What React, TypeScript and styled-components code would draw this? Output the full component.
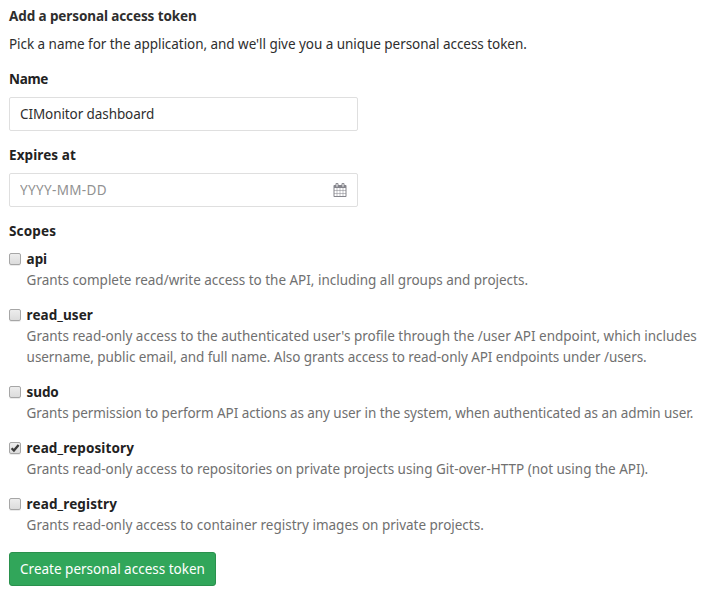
import React, { useState } from "react";
import styled, { createGlobalStyle } from "styled-components";

const GlobalStyle = createGlobalStyle`
  *, *::before, *::after { box-sizing: border-box; }
  body {
    margin: 0;
    background: #fff;
    color: #2e2e2e;
    font: 13.5px/21px "Noto Sans", "Open Sans", sans-serif;
  }
`;

interface Tracked {
  $tracking?: number;
}

const Form = styled.form`
  display: flex;
  flex-direction: column;
  align-items: flex-start;
  width: 705px;
  padding: 6px 0 0 9px;
`;

const Title = styled.h5<Tracked>`
  margin: 0 0 7px;
  font-size: inherit;
  font-weight: 700;
  letter-spacing: ${(p) => p.$tracking ?? 0}px;
`;

const Intro = styled.p<Tracked>`
  margin: 0 0 14px;
  white-space: nowrap;
  letter-spacing: ${(p) => p.$tracking ?? 0}px;
`;

const Field = styled.div`
  display: flex;
  flex-direction: column;
  gap: 7px;
  width: 349px;
  margin-bottom: 14px;
`;

const Label = styled.label<Tracked>`
  color: #222;
  font-weight: 700;
  letter-spacing: ${(p) => p.$tracking ?? 0}px;
`;

const InputFrame = styled.div`
  display: flex;
  align-items: center;
  height: 34px;
  padding: 0 10px;
  border: 1px solid #dfdfdf;
  border-radius: 2px;
  background: #fff;
`;

const TextInput = styled.input<Tracked>`
  flex: 1;
  min-width: 0;
  height: 21px;
  padding: 0;
  border: 0;
  outline: 0;
  background: transparent;
  color: #2e2e2e;
  font: inherit;
  letter-spacing: ${(p) => p.$tracking ?? 0}px;

  &::placeholder {
    color: #919191;
    opacity: 1;
  }
`;

const ScopeList = styled.div`
  display: flex;
  flex-direction: column;
  gap: 14px;
  margin-top: 7px;
`;

const ScopeRow = styled.div`
  display: grid;
  grid-template-columns: 12px 1fr;
  column-gap: 5.6px;
`;

const CheckHolder = styled.span`
  display: grid;
  width: 12px;
  height: 12px;
  margin-top: 4px;

  > * {
    grid-area: 1 / 1;
  }
`;

const Checkbox = styled.input`
  appearance: none;
  width: 12px;
  height: 12px;
  margin: 0;
  border: 1px solid #a6a6a6;
  border-radius: 2px;
  background: linear-gradient(#ededed, #dcdcdc);
  box-shadow: 0 1px 0 rgba(0, 0, 0, 0.08);
`;

const CheckMark = styled.svg`
  width: 12px;
  height: 12px;
  pointer-events: none;
`;

const ScopeText = styled.div`
  display: flex;
  flex-direction: column;
`;

const Description = styled.span<Tracked>`
  display: block;
  color: #707070;
  white-space: nowrap;
  letter-spacing: ${(p) => p.$tracking ?? 0}px;
`;

const SubmitButton = styled.button`
  width: 207px;
  height: 34px;
  margin-top: 16px;
  padding: 0;
  border: 1px solid #2a914d;
  border-radius: 3px;
  background: #31a65a;
  color: #fff;
  font: inherit;
  white-space: nowrap;
`;

const CalendarSvg = styled.svg`
  flex: none;
  width: 14px;
  height: 14px;
`;

const CalendarIcon = () => (
  <CalendarSvg viewBox="0 0 1792 1792" fill="#85858c" aria-hidden="true">
    <path d="M192 1664h288v-288h-288v288zm352 0h320v-288h-320v288zm-352-352h288v-320h-288v320zm352 0h320v-320h-320v320zm-352-384h288v-288h-288v288zm736 736h320v-288h-320v288zm-384-736h320v-288h-320v288zm768 736h288v-288h-288v288zm-384-352h320v-320h-320v320zm-352-864v-288q0-13-9.500-22.500t-22.500-9.500h-64q-13 0-22.500 9.500t-9.500 22.500v288q0 13 9.500 22.500t22.500 9.500h64q13 0 22.500-9.500t9.500-22.500zm736 864h288v-320h-288v320zm-384-384h320v-288h-320v288zm384 0h288v-288h-288v288zm32-480v-288q0-13-9.500-22.500t-22.500-9.500h-64q-13 0-22.500 9.500t-9.500 22.500v288q0 13 9.500 22.500t22.500 9.500h64q13 0 22.500-9.500t9.500-22.500zm384-64v1280q0 52-38 90t-90 38h-1408q-52 0-90-38t-38-90v-1280q0-52 38-90t90-38h128v-96q0-66 47-113t113-47h64q66 0 113 47t47 113v96h384v-96q0-66 47-113t113-47h64q66 0 113 47t47 113v96h128q52 0 90 38t38 90z" />
  </CalendarSvg>
);

interface Scope {
  name: string;
  nameTracking: number;
  lines: { text: string; tracking: number }[];
}

const scopes: Scope[] = [
  {
    name: "api",
    nameTracking: -0.05,
    lines: [{ text: "Grants complete read/write access to the API, including all groups and projects.", tracking: -0.015 }],
  },
  {
    name: "read_user",
    nameTracking: 0.08,
    lines: [
      { text: "Grants read-only access to the authenticated user's profile through the /user API endpoint, which includes", tracking: -0.01 },
      { text: "username, public email, and full name. Also grants access to read-only API endpoints under /users.", tracking: -0.06 },
    ],
  },
  {
    name: "sudo",
    nameTracking: -0.13,
    lines: [{ text: "Grants permission to perform API actions as any user in the system, when authenticated as an admin user.", tracking: -0.07 }],
  },
  {
    name: "read_repository",
    nameTracking: 0.12,
    lines: [{ text: "Grants read-only access to repositories on private projects using Git-over-HTTP (not using the API).", tracking: -0.01 }],
  },
  {
    name: "read_registry",
    nameTracking: 0.13,
    lines: [{ text: "Grants read-only access to container registry images on private projects.", tracking: -0.015 }],
  },
];

export default function App() {
  const [name, setName] = useState("CIMonitor dashboard");
  const [expires, setExpires] = useState("");
  const [selected, setSelected] = useState<string[]>(["read_repository"]);

  const toggle = (scope: string) =>
    setSelected((s) => (s.includes(scope) ? s.filter((x) => x !== scope) : [...s, scope]));

  return (
    <>
      <GlobalStyle />
      <Form onSubmit={(e) => e.preventDefault()}>
        <Title $tracking={-0.1}>Add a personal access token</Title>
        <Intro $tracking={-0.045}>
          Pick a name for the application, and we'll give you a unique personal access token.
        </Intro>
        <Field>
          <Label htmlFor="name" $tracking={-0.3}>Name</Label>
          <InputFrame>
            <TextInput id="name" $tracking={-0.09} value={name} onChange={(e) => setName(e.target.value)} />
          </InputFrame>
        </Field>
        <Field>
          <Label htmlFor="expires" $tracking={0.1}>Expires at</Label>
          <InputFrame>
            <TextInput
              id="expires"
              $tracking={0.35}
              placeholder="YYYY-MM-DD"
              value={expires}
              onChange={(e) => setExpires(e.target.value)}
            />
            <CalendarIcon />
          </InputFrame>
        </Field>
        <Label as="div" $tracking={0.15}>Scopes</Label>
        <ScopeList>
          {scopes.map((scope) => (
            <ScopeRow key={scope.name}>
              <CheckHolder>
                <Checkbox
                  type="checkbox"
                  id={scope.name}
                  checked={selected.includes(scope.name)}
                  onChange={() => toggle(scope.name)}
                />
                {selected.includes(scope.name) && (
                  <CheckMark viewBox="0 0 12 12" aria-hidden="true">
                    <path d="M2.600 6.200 4.900 8.500 9.600 2.900" fill="none" stroke="#3a3a3a" strokeWidth="2.3" />
                  </CheckMark>
                )}
              </CheckHolder>
              <ScopeText>
                <Label htmlFor={scope.name} $tracking={scope.nameTracking}>{scope.name}</Label>
                {scope.lines.map((line) => (
                  <Description key={line.text} $tracking={line.tracking}>{line.text}</Description>
                ))}
              </ScopeText>
            </ScopeRow>
          ))}
        </ScopeList>
        <SubmitButton type="submit">Create personal access token</SubmitButton>
      </Form>
    </>
  );
}
